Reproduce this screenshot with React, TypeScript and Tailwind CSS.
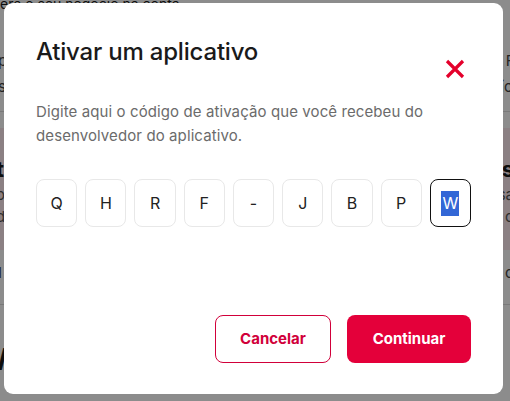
import React from "react";

const chars = ["Q", "H", "R", "F", "-", "J", "B", "P"];

export default function App() {
  return (
    <div
      className="relative w-[510px] h-[401px] overflow-hidden bg-white text-[#1a1a1a]"
      style={{ fontFamily: "Inter, 'Noto Sans', sans-serif" }}
    >
      {/* background page */}
      <div className="flex flex-col">
        <div className="h-[12px] text-[14px] leading-[12px] -mt-[2px] pl-0">era o seu negócio na conta</div>
        <div className="flex justify-between pt-[38px] text-[15px] leading-[26px] text-[#444]">
          <div className="-ml-[2px]">
            <div>pagamentos</div>
            <div>saldo</div>
          </div>
          <div className="text-right -mr-[3px]">
            <div className="mr-[-10px]">Fo</div>
            <div>ío</div>
          </div>
        </div>
        <div className="h-[12px] border-b border-[#ddd]" />
        <div className="mt-[16px] h-[122px] bg-[#fde9ee] flex justify-between">
          <div className="-ml-[4px] pt-[26px]">
            <div className="text-[22px] font-bold leading-[30px]">t</div>
            <div className="text-[15px] leading-[22px] text-[#555]">o,</div>
            <div className="text-[15px] leading-[22px] text-[#555]">d</div>
          </div>
          <div className="-mr-[4px] pt-[26px] text-right">
            <div className="text-[22px] font-bold leading-[30px]">s</div>
            <div className="text-[15px] leading-[22px] text-[#555]">sa</div>
            <div className="text-[15px] leading-[22px] text-[#555]">o</div>
          </div>
        </div>
        <div className="flex justify-between pt-[12px] h-[55px] border-b border-[#ddd] text-[15px] text-[#444]">
          <div className="-ml-[2px]">I</div>
          <div className="-mr-[4px]">o</div>
        </div>
        <div className="pt-[36px] -ml-[10px] text-[30px] font-bold leading-[36px]">W</div>
      </div>

      {/* overlay */}
      <div className="absolute inset-0 bg-black/45" />

      {/* modal */}
      <div className="absolute left-[4px] top-[3px] w-[499px] h-[391px] bg-white rounded-[9px] px-8 flex flex-col">
        <div className="flex items-start justify-between pt-[34px]">
          <h2 className="text-[24px] leading-[30px] font-medium text-[#1a1a1a] tracking-[-0.2px]">
            Ativar um aplicativo
          </h2>
          <button className="mt-[21px] mr-[5px] w-[22px] h-[22px] flex items-center justify-center">
            <svg width="20" height="20" viewBox="0 0 20 20">
              <path d="M2 2 L18 18 M18 2 L2 18" stroke="#e4002b" strokeWidth="3.2" strokeLinecap="butt" />
            </svg>
          </button>
        </div>
        <p className="mt-[20px] text-[15px] leading-[24px] text-[#6b6b6b] tracking-[0.1px] pr-[30px]">
          Digite aqui o código de ativação que você recebeu do desenvolvedor do aplicativo.
        </p>
        <div className="mt-[31px] grid grid-cols-9 gap-2">
          {chars.map((c, i) => (
            <div
              key={i}
              className="h-[48px] rounded-[8px] border border-[#e8e8e8] flex items-center justify-center text-[16px] text-[#222]"
            >
              {c}
            </div>
          ))}
          <div className="h-[48px] rounded-[8px] border border-[#111] flex items-center justify-center text-[16px]">
            <span className="bg-[#3367d6] text-white leading-[25px] px-[1px]">W</span>
          </div>
        </div>
        <div className="mt-auto mb-[31px] flex justify-end gap-4">
          <button className="w-[116px] h-[48px] rounded-[8px] border border-[#d1003a] text-[#d1003a] text-[15px] font-bold">
            Cancelar
          </button>
          <button className="w-[124px] h-[48px] rounded-[8px] bg-[#e4003a] text-white text-[15px] font-bold">
            Continuar
          </button>
        </div>
      </div>
    </div>
  );
}
